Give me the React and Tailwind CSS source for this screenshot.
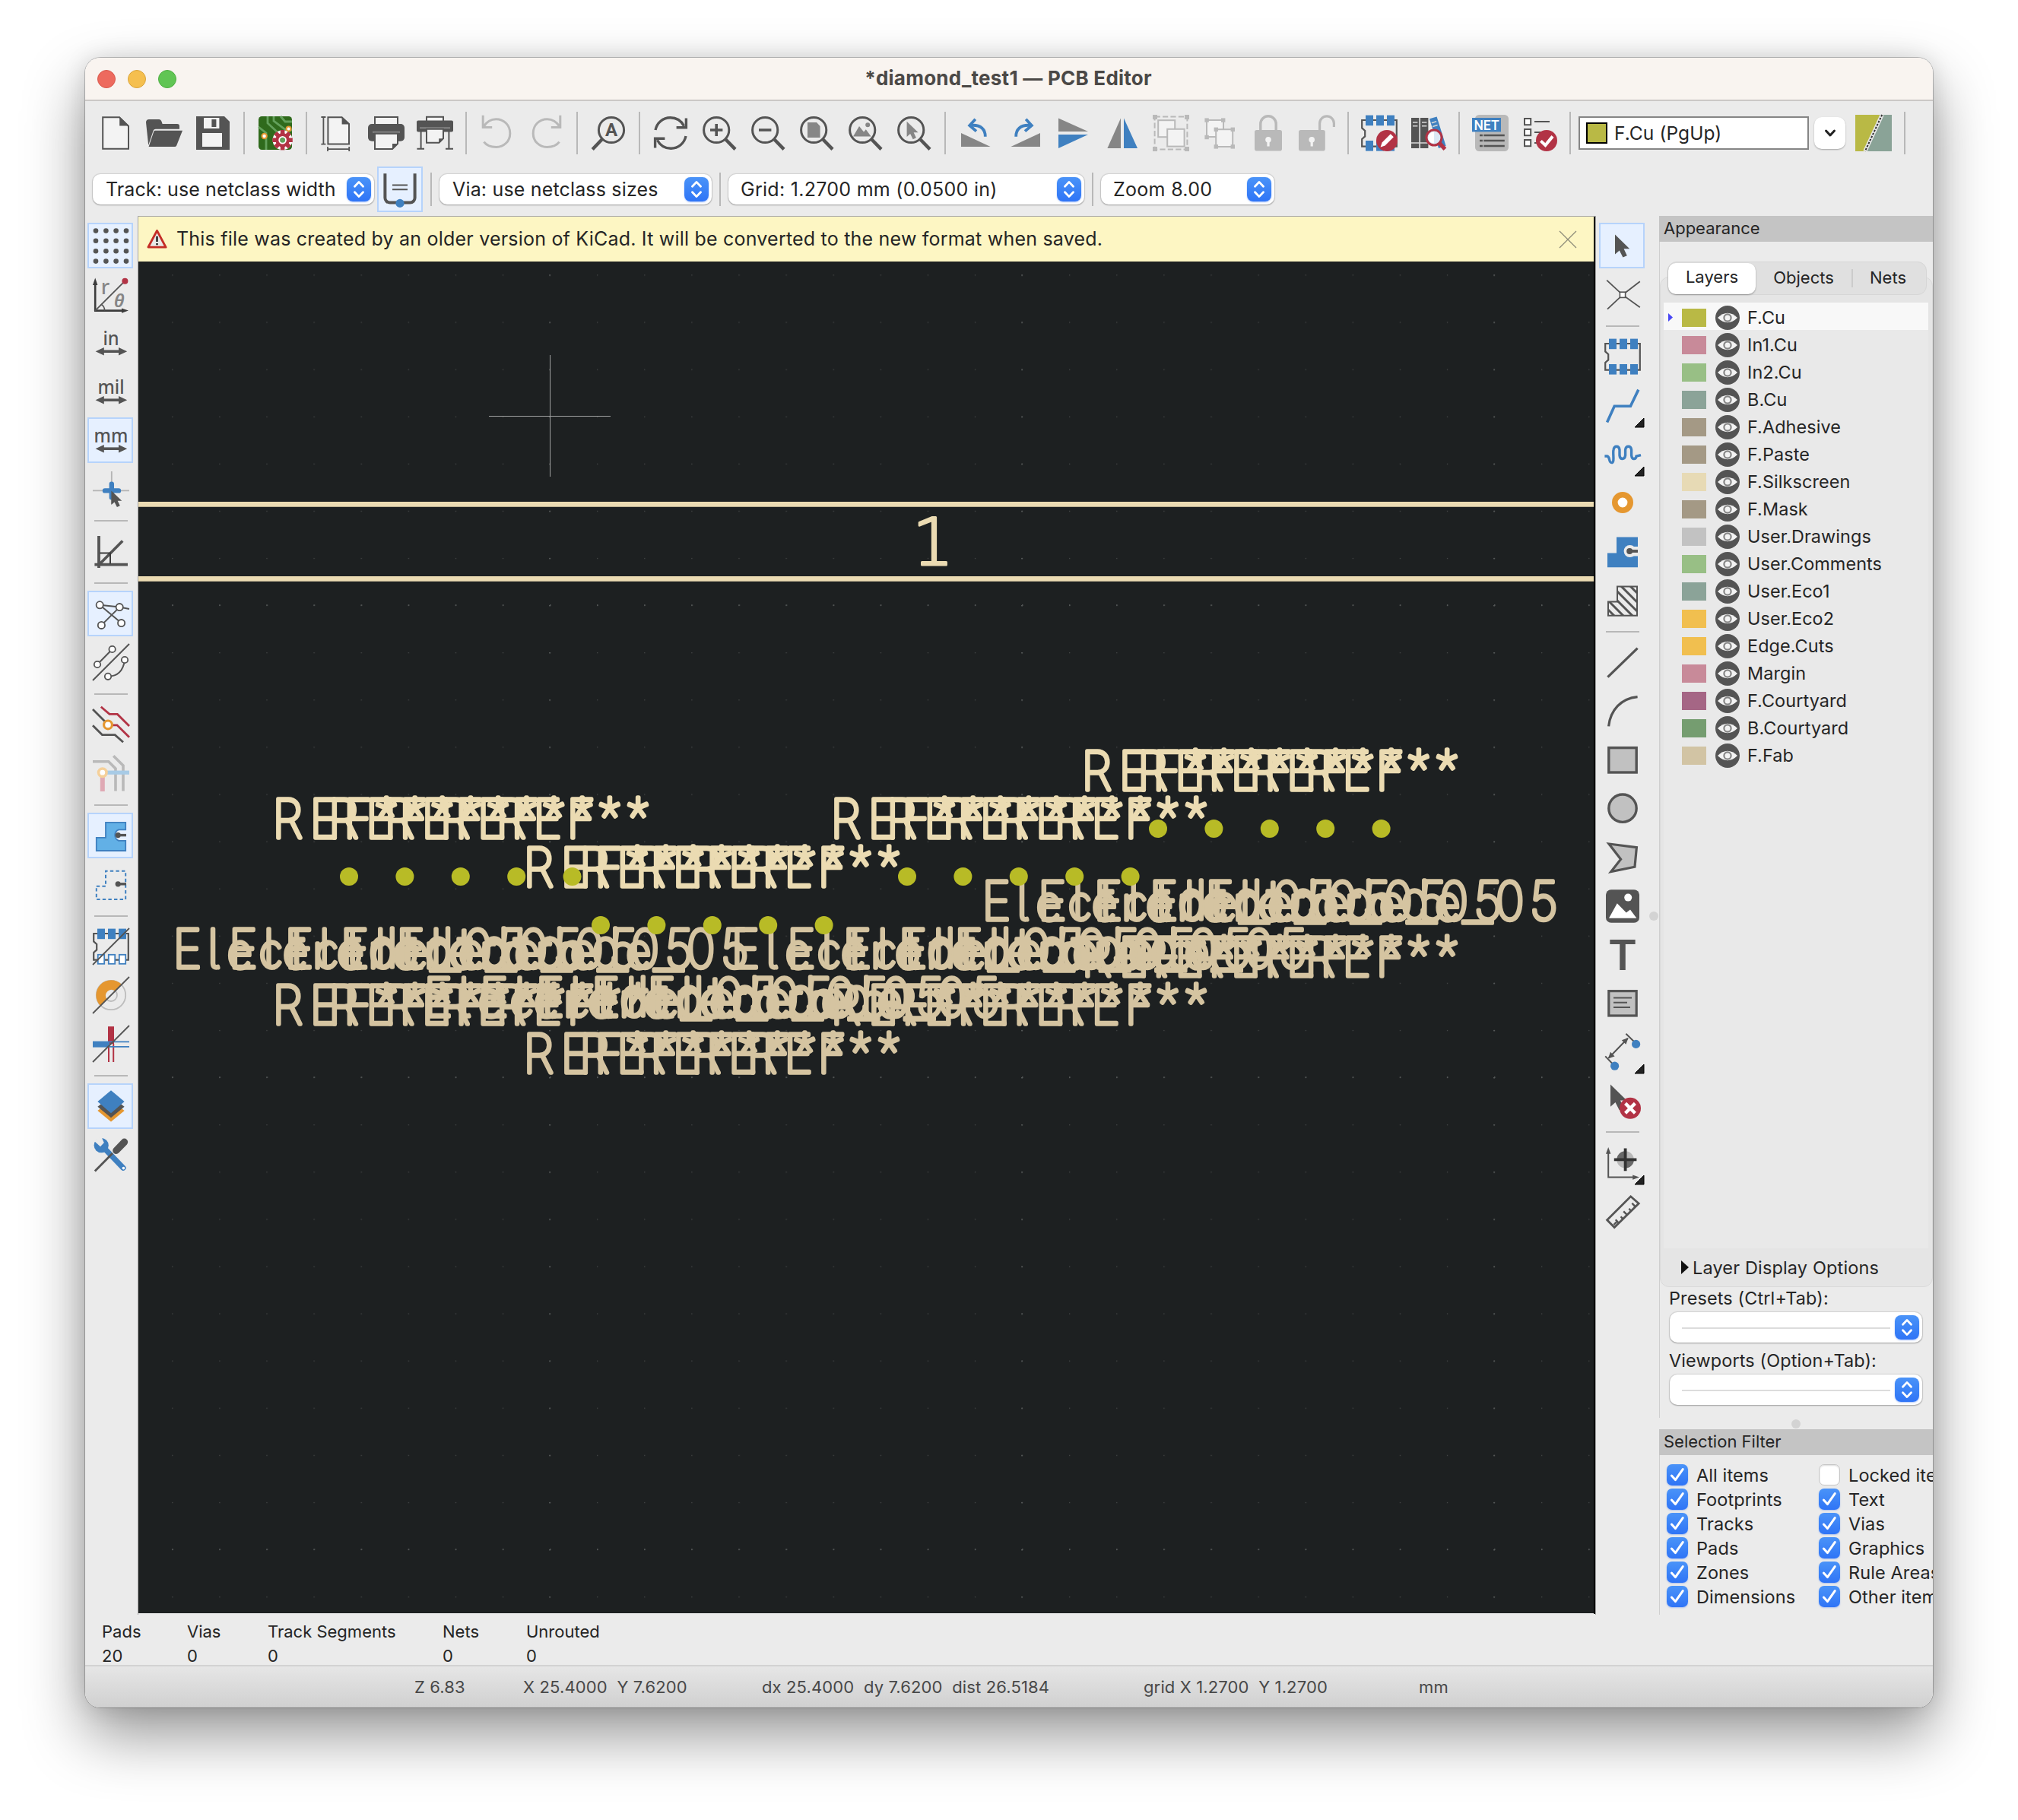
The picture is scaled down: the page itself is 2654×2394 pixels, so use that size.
import React from "react";

const D = "#545454";
const B = "#3f80c0";
const G = "#b9b9b9";
const M = "#868686";
const R = "#b23345";
const O = "#e59730";
const W = "#f3f3f3";

function Icon({ children, size = "w-12 h-12" }) {
  return (
    <svg viewBox="0 0 24 24" className={"shrink-0 overflow-visible " + size} fill="none">
      {children}
    </svg>
  );
}

const Lens = ({ children }) => (
  <>
    <circle cx="10.1" cy="10" r="8.3" stroke={D} strokeWidth="1.5" />
    <path d="M16 16L22.5 22.7" stroke={D} strokeWidth="2.2" />
    {children}
  </>
);
const Cursor = ({ x = 0, y = 0, s = 1, c = D }) => (
  <path transform={`translate(${x} ${y}) scale(${s})`} d="M0 0V13L2.9 10.4L5.2 15L7.9 13.8L5.8 9.3H9.6Z" fill={c} />
);
const Body = () => (
  <path d="M.6 3.5H23.4V20.8H.6V16L2.6 14.2V10.5L.6 8.7Z" stroke={D} strokeWidth="1.1" />
);
const Pads = ({ hollow }) => (
  <>
    {[3, 10, 17].map((x) => (
      <React.Fragment key={x}>
        <rect x={x} y="0.3" width="5" height="6.8" fill={B} />
        {hollow ? (
          <rect x={x + 0.4} y="17.4" width="4.2" height="6" fill="#fff" stroke={B} strokeWidth=".9" />
        ) : (
          <rect x={x} y="17" width="5" height="6.8" fill={B} />
        )}
      </React.Fragment>
    ))}
  </>
);
const Slash = () => <path d="M0 24L24 0" stroke={D} strokeWidth=".9" />;
const ZONE = "M2.4 13.4H8.5V3.4H21.6V8.2H17A3.9 3.9 0 0 0 17 15.4H21.6V22H2.4Z";
const Units = ({ label, w }) => (
  <>
    <text x="12" y="13.3" textAnchor="middle" fontSize="12.8" textLength={w} lengthAdjust="spacingAndGlyphs" fontFamily="Noto Sans, sans-serif" fontWeight="500" fill={D}>{label}</text>
    <path d="M5 17.6H19.5" stroke={D} strokeWidth="1.8" />
    <path d="M1.8 17.6L7.4 15V20.2ZM22.6 17.6L17 15V20.2Z" fill={D} />
  </>
);

const I = {
  new: <><path d="M3.6 1.6H14.5L20.5 7.5V22.4H3.6Z" fill={W} stroke={D} strokeWidth="1" /><path d="M14.6 1.2L20.9 7.2H14.6Z" fill={D} /></>,
  open: <><path d="M0 5C0 3.8.8 3 2 3H8.5C9.5 3 10 3.6 10.4 4.8L10.8 6H20.5C21.6 6 22 6.6 22 7.6V9.4H6.4C5.4 9.4 5 9.8 4.7 10.7L1.6 20Z" fill={D} /><path d="M6.4 10.4H24L20.2 20C19.9 20.7 19.5 21 18.7 21H1.8L5 11.4C5.2 10.7 5.6 10.4 6.4 10.4Z" fill={D} /></>,
  save: <><path d="M1 1H19.5L23 4.5V23H1Z" fill={D} /><rect x="6" y="2" width="10.2" height="7" fill={W} /><rect x="11.2" y="3" width="3" height="5" fill={D} /><rect x="5" y="12" width="13" height="9" fill={W} /></>,
  board: <>
    <rect x="1" y="1" width="22" height="22" rx="2.2" fill="#2f6a1c" />
    <path d="M7 1V5.5L13.5 11.5V16M11 1V4L19 10H23M15.5 1L18.5 4.5H23M1 8L6 12V23" stroke="#63a05b" strokeWidth="1.4" />
    <circle cx="4.8" cy="14" r="1.6" fill="#fff" stroke={O} strokeWidth="1" />
    <circle cx="20.8" cy="9.3" r="1.5" fill="#fff" stroke={O} strokeWidth="1" />
    <g transform="translate(16.8 16.6)">
      <circle r="6" stroke="#fff" strokeWidth="1" fill="#fff" />
      {[0, 45, 90, 135].map((a) => <rect key={a} x="-1.4" y="-6.6" width="2.8" height="13.2" fill={R} transform={`rotate(${a})`} />)}
      <circle r="4.6" fill={R} /><circle r="2.2" fill="#63a05b" stroke="#fff" strokeWidth=".9" />
    </g>
  </>,
  page: <><path d="M5.7 1.6H14.8L19.5 6V19.2H5.7Z" fill={W} stroke={D} strokeWidth="1" /><path d="M14.8 1.2L20 6.3H14.8Z" fill={D} /><path d="M2.7 1.5V19.3M1.2 1.5H4.2M1.2 19.3H4.2M5.5 22.6H19.6M5.5 21V24M19.6 21V24" stroke={D} strokeWidth=".9" /></>,
  print: <><rect x="4.5" y="1.5" width="15" height="6" fill={W} stroke={D} strokeWidth="1" /><rect x="0" y="6" width="24" height="11.4" rx="2.5" fill={D} /><path d="M3 11.4H21" stroke="#858585" strokeWidth="1" /><path d="M4.5 12.4H19.5V19L16 22.5H4.5Z" fill={W} stroke={D} strokeWidth="1" /><path d="M16 22.8V19H19.8Z" fill={D} /></>,
  plot: <><rect x="6.5" y="1.4" width="11" height="4" fill={W} stroke={D} strokeWidth="1" /><rect x="0" y="3.7" width="24" height="7.6" rx="1" fill={D} /><path d="M2 8.6H22" stroke="#858585" strokeWidth="1" /><path d="M6.5 9.4H17.5V15.6L14.7 18.4H6.5Z" fill={W} stroke={D} strokeWidth="1" /><path d="M14.6 18.6V15.6H17.8Z" fill={D} /><path d="M2.8 11V22.4M21.2 11V22.4M.2 22.4H5M19 22.4H24" stroke={D} strokeWidth="1" /></>,
  undo: <path d="M2.6 .4V8.2H8.6M3 7.8C5 4.6 8 2.9 11.2 2.9C16.4 2.9 20.4 6.8 20.4 12.2C20.4 17.4 16.4 21.2 11.3 21.2C8 21.2 5 20.2 3.2 17.8" stroke={G} strokeWidth="1.5" />,
  redo: <path d="M21.4 .4V8.2H15.4M21 7.8C19 4.6 16 2.9 12.8 2.9C7.6 2.9 3.6 6.8 3.6 12.2C3.6 17.4 7.6 21.2 12.7 21.2C16 21.2 19 20.2 20.8 17.8" stroke={G} strokeWidth="1.5" />,
  find: <><circle cx="14" cy="10" r="8.3" stroke={D} strokeWidth="1.5" /><path d="M8 16L1.6 22.7" stroke={D} strokeWidth="2.2" /><text x="14" y="14.2" textAnchor="middle" fontSize="12" fontWeight="700" fontFamily="Roboto, sans-serif" fill={D}>A</text></>,
  refresh: <><path d="M2 10C3 5.2 7 1.9 11.8 1.9C15.6 1.9 19 4 20.8 7.4M22 14C21 18.8 17 22.1 12.2 22.1C8.4 22.1 5 20 3.2 16.6" stroke={D} strokeWidth="1.7" /><path d="M22.2 2.2V8.4H15.8M1.8 21.8V15.6H8.2" stroke={D} strokeWidth="1.7" /></>,
  zin: <Lens><path d="M6 10H14.2M10.1 6V14" stroke={D} strokeWidth="1.8" /></Lens>,
  zout: <Lens><path d="M6 10H14.2" stroke={D} strokeWidth="1.8" /></Lens>,
  zfit: <Lens><path d="M6 5H12L14.3 7.5V15H6Z" fill={M} /></Lens>,
  zobj: <Lens><path d="M4 14.2L8 7.5L11 11.2L12.4 9.6L15.8 14.2Z" fill={M} /><circle cx="13.6" cy="6.6" r="1.5" fill={M} /></Lens>,
  zsel: <Lens><Cursor x={7.3} y={4.4} s={0.78} c={M} /></Lens>,
  ccw: <><path d="M2 12V21H21.3Z" fill={M} /><path d="M17.9 14.4C18 9.6 15 6.6 9 6.9" stroke={B} strokeWidth="1.9" /><path d="M11.4 2.9L7.6 7L12 10.8" stroke={B} strokeWidth="1.9" /></>,
  cw: <><path d="M22 12V21H2.7Z" fill={M} /><path d="M6.1 14.4C6 9.6 9 6.6 15 6.9" stroke={B} strokeWidth="1.9" /><path d="M12.6 2.9L16.4 7L12 10.8" stroke={B} strokeWidth="1.9" /></>,
  mv: <><path d="M2 2.2V11H21.5Z" fill={M} /><path d="M2 22V13H21.5Z" fill={B} /></>,
  mh: <><path d="M2.2 22H11V2.2Z" fill={M} /><path d="M22 22H13V2.2Z" fill={B} /></>,
  group: <><rect x="1.3" y="1.3" width="21.4" height="21.4" stroke={G} strokeWidth="1" strokeDasharray="3.6 1.6" />{[[0, 0], [21, 0], [0, 21], [21, 21]].map(([x, y]) => <rect key={x + "-" + y} x={x} y={y} width="3" height="3" fill={G} />)}<rect x="3.6" y="3.6" width="11" height="11" fill={W} stroke={G} /><rect x="9.6" y="9.4" width="11.2" height="11.4" fill={W} stroke={G} /></>,
  ungroup: <><rect x="3.5" y="3.5" width="11" height="11" fill={W} stroke={G} /><rect x="9.6" y="9.6" width="11" height="11.4" fill={W} stroke={G} />{[[2.2, 2.2], [13, 2.2], [2.2, 13.4], [8.3, 8.3], [19.3, 8.3], [8.3, 19.6], [19.3, 19.6]].map(([x, y]) => <rect key={x + "-" + y} x={x} y={y} width="2.7" height="2.7" fill={G} />)}</>,
  lock: <><path d="M6.9 10V6A5.1 5.1 0 0 1 17.1 6V10" stroke={G} strokeWidth="1.7" /><rect x="3" y="10" width="18" height="13.8" rx="1.4" fill={G} /><circle cx="12" cy="16.4" r="1.9" fill={W} /><path d="M12 16V20.8" stroke={W} strokeWidth="1.6" /></>,
  unlock: <><path d="M13.8 10V5.6A4.7 4.7 0 0 1 23.2 5.6V8" stroke={G} strokeWidth="1.6" /><rect x="0" y="10" width="17.4" height="13.8" rx="1.4" fill={G} /><circle cx="8.6" cy="16.4" r="1.9" fill={W} /><path d="M8.6 16V20.8" stroke={W} strokeWidth="1.6" /></>,
  fpedit: <><Body /><Pads /><circle cx="17" cy="17" r="7" fill={R} /><path d="M12.8 21.2L13.8 18.2L19.4 12.6L21.4 14.6L15.8 20.2Z" fill="#fff" /></>,
  lib: <><rect x="1" y="2" width="5.2" height="20" fill={D} /><rect x="7" y="2" width="5.2" height="20" fill={D} /><path d="M2 5H5.2M2 7.4H5.2M8 5H11.2M8 7.4H11.2M1 18.5H12.2" stroke="#d8d8d8" strokeWidth=".8" /><path d="M13 2.6L17.8 1.2L23.8 20.5L19 22Z" fill={B} /><path d="M14.4 5.4L17.6 4.4M15.1 7.8L18.3 6.8" stroke="#d8d8d8" strokeWidth=".8" /><path d="M19.4 18.4L23.2 22.6" stroke={R} strokeWidth="2.6" /><circle cx="16" cy="15" r="5" fill="#dbe8f4" stroke={R} strokeWidth="1.5" /><path d="M16 11.2V18.8A3.8 3.8 0 0 1 16 11.2" fill="#fff" /></>,
  net: <><rect x="2" y="0" width="22" height="24" rx="2.6" fill={G} /><rect x="0" y="2" width="19" height="9.2" fill={B} /><text x="9.5" y="9.8" textAnchor="middle" fontSize="8.8" textLength="16.6" lengthAdjust="spacingAndGlyphs" fontWeight="500" fontFamily="Roboto, sans-serif" fill="#fff">NET</text><path d="M5 13.5H21.4M5 17H21.4M5 20.5H21.4" stroke={D} strokeWidth="1.2" /><path d="M7.3 12.4V22" stroke={G} strokeWidth=".7" /></>,
  drc: <>{[2.5, 9.5, 16.5].map((y) => <rect key={y} x="2.5" y={y} width="4.1" height="4.1" fill="#fff" stroke={D} />)}<path d="M9 4.5H19M9 11.5H17M9 18.5H12" stroke={D} strokeWidth="1" /><circle cx="17" cy="17" r="7" fill={R} /><path d="M13.2 17.2L16.2 20L21 14.2" stroke="#fff" strokeWidth="2" /></>,
  pair: <><rect width="24" height="24" fill="#b9b945" /><path d="M18 0H24V24H6.8Z" fill="#8aa397" /><path d="M17.6 0L6.4 24" stroke="#e8e8e8" strokeWidth="2.6" /><path d="M17.6 0L6.4 24" stroke="#333" strokeWidth="1" strokeDasharray="1.3 .9" /></>,
  width: <g transform="translate(-.6 0)"><path d="M2.8 1.6V17.6A3.2 3.2 0 0 0 6 20.8H19.2A3.2 3.2 0 0 0 22.4 17.6V1.6" stroke={D} strokeWidth="2" /><path d="M7.6 9.3H17.6M7.6 12.1H17.6" stroke={D} strokeWidth="1" /><circle cx="12.6" cy="21.2" r="2.8" fill={B} /></g>,

  grid: <>{[2, 8.7, 15.3, 22].map((x) => [2.3, 8.9, 15.6, 22.3].map((y) => <circle key={x + "-" + y} cx={x} cy={y} r="1.65" fill={D} />))}</>,
  polar: <><path d="M1.6 23V4M1 22.8H21" stroke="#3c3c3c" strokeWidth="1.3" /><path d="M1.6 1.2L3.2 6H0ZM23.5 22.8L19 21.2V24.4Z" fill="#3c3c3c" /><path d="M1.6 22.8L20 4.4" stroke={D} strokeWidth=".9" /><path d="M5.4 18.6C7 19.4 7.8 21 7.8 22.8" stroke={D} strokeWidth=".8" /><circle cx="21.2" cy="3.4" r="2" fill={R} /><text x="5.4" y="12" fontSize="13.5" fontFamily="Noto Sans, sans-serif" fontWeight="500" fill={M}>r</text><text x="14" y="20.6" fontSize="12" fontStyle="italic" fontFamily="Noto Sans, sans-serif" fontWeight="600" fill={M}>θ</text></>,
  inch: <Units label="in" w={10.6} />,
  mil: <Units label="mil" w={17.5} />,
  mm: <Units label="mm" w={22.4} />,
  cross: <><path d="M0 13.2H24M12.4 .5V22" stroke="#b4b4b4" strokeWidth=".9" /><path d="M12.4 8.8V17.6M8 13.2H17" stroke={B} strokeWidth="3.2" strokeLinecap="round" /><Cursor x={12.2} y={13.2} s={0.72} /></>,
  angle: <><path d="M4 2V23M1.2 20.8H23" stroke={D} strokeWidth="1.9" /><path d="M4 21L19.6 5.2" stroke={D} strokeWidth="1.8" /><path d="M4.6 13.2H11.5V20.2" stroke="#3c3c3c" strokeWidth="1" /></>,
  rats: <><path d="M4.6 6.4L17.6 7.8L24 9M4.6 6.4L18.8 18.3M5.7 19.7L17.6 7.8" stroke={D} strokeWidth="1" />{[[4.6, 6.4], [17.6, 7.8], [18.8, 18.3], [5.7, 19.7]].map(([x, y]) => <circle key={x} cx={x} cy={y} r="2.3" fill="#fff" stroke={D} strokeWidth=".9" />)}</>,
  curved: <><path d="M3 13.5L12.8 3.5M0 24L24 0M10 21.4C16 21.4 20 18 21 10.6" stroke={D} strokeWidth="1" />{[[12.8, 3.5], [3, 13.5], [21, 10.5], [10, 21.4]].map(([x, y]) => <circle key={x} cx={x} cy={y} r="2.1" fill="#fff" stroke={D} strokeWidth=".9" />)}</>,
  hicon: <><path d="M5.4 .4L11 5.2H16.2L24 13M12 12.4H16L24 20.4" stroke={R} strokeWidth="1.4" /><path d="M0 2L9 11M0 12.6L6.2 18.8H14.6L20 23.6" stroke={D} strokeWidth="1.4" /><circle cx="10" cy="12.2" r="2.7" fill="#fff" stroke={O} strokeWidth="1.6" /></>,
  netcol: <><path d="M0 4.4H10.4L15 9V23.8M13.6 .6L20 7V23.8" stroke={G} strokeWidth="1.8" /><path d="M8 11.6H24" stroke="#a8cbe6" strokeWidth="2.6" /><path d="M6.4 13V24" stroke="#dfa9b4" strokeWidth="3" /><circle cx="6.4" cy="11.6" r="2.6" fill="#fff" stroke="#f5d09a" strokeWidth="1.8" /></>,
  zfill: <><path d={ZONE} fill="#62b0e6" stroke={B} strokeWidth=".9" /><circle cx="16.6" cy="11.8" r="1.8" fill={D} /><path d="M16.6 11.8H22" stroke={D} strokeWidth="1.7" /></>,
  zout2: <><path d="M2.4 13.4H8.5V3.4H21.6V22H2.4Z" stroke={B} strokeWidth="1" strokeDasharray="2.2 1.6" /><circle cx="16.6" cy="11.9" r="1.8" fill={D} /><path d="M16.6 11.9H22" stroke={D} strokeWidth="1.7" /></>,
  fpsk: <><Body /><Pads hollow /><Slash /></>,
  padsk: <><circle cx="12" cy="12" r="9.6" stroke="#bdbdbd" strokeWidth=".9" /><circle cx="12" cy="12" r="4" stroke="#bdbdbd" strokeWidth=".9" /><path d="M5 19A9.9 9.9 0 0 1 19 5L14.8 9.2A4 4 0 0 0 9.2 14.8Z" fill={O} /><Slash /></>,
  trsk: <><path d="M12 .6V12" stroke={R} strokeWidth="4" /><path d="M10.5 12V24M13.6 12V24" stroke={R} strokeWidth="1" /><path d="M0 12.3H11" stroke={B} strokeWidth="4" /><path d="M11 10.7H24M11 13.9H24" stroke={B} strokeWidth=".9" /><Slash /></>,
  layers: <><path d="M12 8L20.8 15L12 22.3L3.2 15Z" fill={O} /><path d="M12 5.4L20.8 12.4L12 19.6L3.2 12.4Z" fill={D} /><path d="M12 1.6L20.8 9L12 16.6L3.2 9Z" fill={B} /></>,
  tools: <><path d="M5 5L20 20.6" stroke={B} strokeWidth="3.6" strokeLinecap="round" /><circle cx="5.6" cy="5.8" r="4.8" fill={B} /><path d="M5.4 -.4L1 3L5 6.6L7.4 4Z" fill="#ebebeb" /><circle cx="20.2" cy="20.8" r=".9" fill="#fff" /><path d="M1.4 22.8L13 11" stroke={D} strokeWidth="1.4" /><path d="M15.4 9.2L20.8 3.6" stroke={D} strokeWidth="4.6" strokeLinecap="round" /></>,

  arrow: <Cursor x={7} y={4.8} s={1} />,
  inspect: <><path d="M1.6 2.8L12 12.4L23.4 3.6M2 21.8L12 12.4L23.4 20.6" stroke={D} strokeWidth=".9" /><rect x="10.2" y="10.6" width="3.6" height="3.6" fill="#fff" stroke={D} strokeWidth=".8" /></>,
  fp: <><Body /><Pads /></>,
  route: <path d="M1.8 23.2L6.6 12.6H17.2L22.4 1.8" stroke={B} strokeWidth="1.8" />,
  tune: <path d="M.2 13.5H1.6C4 13.5 2.6 17.8 4.7 17.8C7 17.8 5.4 12 6 9.4C6.5 6.4 9.6 6.4 10 9.4V13C10.3 16 13.4 16 13.8 13V9.4C14.2 6.4 17.4 6.4 17.8 9.4V13C18.2 16.4 20.8 15.4 21 13.6L24 12.8" stroke={B} strokeWidth="1.7" />,
  via: <circle cx="12" cy="12" r="5.1" fill="#fff" stroke={O} strokeWidth="3.8" />,
  zone: <><path d="M2 13.2H8V2.8H22V9H17A3.2 3.2 0 0 0 17 15.2H22V22.6H2Z" fill={B} /><circle cx="16.8" cy="12" r="4" fill="#ebebeb" /><circle cx="16.6" cy="12" r="2" fill={D} /><path d="M16.6 12H22" stroke={D} strokeWidth="1.9" /></>,
  keep: <><defs><clipPath id="kp"><path d="M2.4 13.2H8.4V3.2H21.6V22.4H2.4Z" /></clipPath></defs><g clipPath="url(#kp)"><path d="M-4 6L14 24M0 4L20 24M4 2L26 24M8 0L28 20M-6 10L8 24M13 -1L30 16" stroke={D} strokeWidth="1.5" /></g><path d="M2.5 13.2H8.5V3.2H21.5V22.4H2.5Z" stroke={D} strokeWidth="1" /></>,
  line: <path d="M2.2 21.8L21.8 2.8" stroke={D} strokeWidth="1.6" />,
  arc: <path d="M2.8 22.2C4 11.5 11 3.8 21.8 2.8" stroke={D} strokeWidth="1.6" />,
  rect: <rect x="2.9" y="4.3" width="18.2" height="16.2" fill="#c1c1c1" stroke={D} strokeWidth="1.7" />,
  circle: <circle cx="12" cy="12.1" r="9.1" fill="#c1c1c1" stroke={D} strokeWidth="1.7" />,
  poly: <path d="M3 3.5L21.2 5.8L20 18.6L4.4 21.8L10.8 13.6Z" fill="#c1c1c1" stroke={D} strokeWidth="1.6" />,
  image: <><rect x="1" y="1.6" width="22" height="21.8" rx="3.4" fill={D} /><path d="M3 20.4L8.4 10.6L14.4 16.8L17 14.8L21.2 20.4Z" fill="#fff" /><circle cx="15.6" cy="6.8" r="2.5" fill="#fff" /></>,
  text: <text x="12" y="22.4" textAnchor="middle" fontSize="27.4" textLength="19" lengthAdjust="spacingAndGlyphs" fontFamily="Inter, sans-serif" fontWeight="600" fill={D}>T</text>,
  tbox: <><rect x="2.9" y="4.3" width="18.2" height="16.2" fill="#c1c1c1" stroke={D} strokeWidth="1.6" /><path d="M6 8.8H18M6 11.9H15M6 15H17" stroke={D} strokeWidth="1" /></>,
  dim: <><path d="M14.2 .4L21 7M.6 15.2L6.8 21.6M2.8 16.4L15.4 3.4" stroke={D} strokeWidth="1" /><path d="M2.4 16.8L4 12.4L6.8 15.2ZM15.8 3L14.2 7.4L11.4 4.6Z" fill={D} /><circle cx="20.8" cy="7.2" r="2.8" fill={B} /><circle cx="6.8" cy="21.6" r="2.8" fill={B} /></>,
  del: <><Cursor x={4} y={1.8} s={1.12} /><circle cx="17" cy="17.4" r="7" fill={R} /><path d="M13.8 14.2L20.2 20.6M20.2 14.2L13.8 20.6" stroke="#fff" strokeWidth="2.2" /></>,
  origin: <><path d="M2.6 22V5M2.1 21.8H20" stroke={D} strokeWidth="1" /><path d="M2.6 2L4.2 6.4H1ZM23 21.8L18.6 20.2V23.4Z" fill={D} /><circle cx="13.8" cy="10.2" r="5.6" fill={G} /><path d="M13.8 10.2V4.6A5.6 5.6 0 0 0 8.2 10.2ZM13.8 10.2V15.8A5.6 5.6 0 0 0 19.4 10.2Z" fill={D} opacity=".8" /><path d="M13.8 2.8V17.6M6.4 10.2H21.2" stroke="#333" strokeWidth="1.9" /></>,
  ruler: <><path d="M17.3 2.4L22.6 7L6.6 22.8L1.8 17.9Z" stroke={D} strokeWidth="1.4" /><path d="M5.2 19.6L7 17.8M8.6 18.6L6.4 16.2M11.2 15.8L9.8 14.2M14 13.2L11.6 10.8M16.6 10.6L15.2 9M19.4 7.8L17.2 5.4" stroke={D} strokeWidth="1.2" transform="translate(1 1.4)" /></>,
};

const TOP = ["new", "open", "save", "|", "board", "|", "page", "print", "plot", "|", "undo", "redo", "|", "find", "|", "refresh", "zin", "zout", "zfit", "zobj", "zsel", "|", "ccw", "cw", "mv", "mh", "group", "ungroup", "lock", "unlock", "|", "fpedit", "lib", "|", "net", "drc", "|"];
const LEFT = ["grid*", "polar", "inch", "mil", "mm*", "cross", "|", "angle", "|", "rats*", "curved", "|", "hicon", "netcol", "|", "zfill*", "zout2", "|", "fpsk", "padsk", "trsk", "|", "layers*", "tools"];
const RIGHT = ["arrow*", "inspect", "|", "fp", "route+", "tune+", "via", "zone", "keep", "|", "line", "arc", "rect", "circle", "poly", "image", "text", "tbox", "dim+", "del", "|", "origin+", "ruler"];

function SideBar({ items }) {
  return (
    <div className="flex flex-col w-[60px] pt-[7px]">
      {items.map((it, i) => {
        if (it === "|")
          return (
            <div key={i} className="h-[18px] flex items-center justify-center pl-[2px] pt-[2px]">
              <div className="w-11 h-[2px] bg-[#b8b8b8]" />
            </div>
          );
        const on = it.endsWith("*");
        const menu = it.endsWith("+");
        return (
          <div key={i} className="h-16 flex items-center">
            <div className={"relative w-[60px] h-[60px] flex items-center justify-center pl-[2px] " + (on ? "bg-[#e6f0ff] outline-2 -outline-offset-2 outline-[#b6d3fb]" : "")}>
              <Icon>{I[it.replace(/[*+]/, "")]}</Icon>
              {menu && (
                <svg viewBox="0 0 14 14" className="absolute right-0 bottom-0 w-[14px] h-[14px]">
                  <path d="M13 1V13H1Z" fill="#222" stroke="#000" />
                </svg>
              )}
            </div>
          </div>
        );
      })}
    </div>
  );
}

function Stepper() {
  return (
    <div className="w-8 h-8 rounded-[8px] bg-linear-to-b from-[#4a93f8] to-[#2f74f6] flex items-center justify-center shrink-0 shadow-[0_1px_2px_rgba(50,110,240,.4)]">
      <svg viewBox="0 0 16 24" className="w-4 h-6" fill="none" stroke="#fff" strokeWidth="2.8" strokeLinecap="round" strokeLinejoin="round">
        <path d="M2.5 8.2L8 2.4L13.5 8.2M2.5 15.8L8 21.6L13.5 15.8" />
      </svg>
    </div>
  );
}

function Select({ label, className }) {
  return (
    <div className={"h-10 rounded-[10px] bg-white flex items-center justify-between pr-1 shadow-[0_0_1px_1px_rgba(0,0,0,.10),0_1px_2px_rgba(0,0,0,.25)] " + className}>
      {label ? <span className="text-[25px] leading-10 whitespace-nowrap">{label}</span> : <div className="w-[274px] h-[2px] bg-[#dcdcdc] mt-[2px]" />}
      <Stepper />
    </div>
  );
}

const VSep = ({ h = "h-14", w = "w-[18px]" }) => (
  <div className={"flex justify-center shrink-0 " + w}>
    <div className={"w-[2px] bg-[#b8b8b8] " + h} />
  </div>
);

const U = 49 / 21;
const SX = 0.93;
const PEN = 5.4;
/* board font metrics: advance and left bearing in units, drawn size, outline bearing in em, baseline shift */
const GLYPH = {
  R: [21, 5, 70, 0.11, 0],
  E: [19, 5, 70, 0.11, 0],
  F: [18, 5, 70, 0.11, 0],
  "*": [16, 2.9, 65, 0.01, -7.4],
  l: [11, 5, 70, 0.09, 0],
  e: [18, 4, 62, 0.06, -0.6],
  c: [18, 4, 62, 0.06, -0.6],
  t: [12, 2.2, 73, 0.01, 0],
  r: [13, 5, 62, 0.08, 0],
  o: [19, 4.8, 62, 0.06, -0.6],
  d: [19, 4, 70, 0.06, -1],
  _: [16, 0.2, 96, 0, 1.5],
  0: [20, 4.5, 69, 0.07, -0.4],
  5: [20, 4.2, 70, 0.08, -0.4],
};

function BoardText({ x, y, color, children }) {
  let pen = 0;
  return (
    <text
      transform={`translate(${x} ${y + 53.4}) scale(${SX} 1)`}
      fontFamily="Inter, sans-serif"
      fontWeight="100"
      fill={color}
      stroke={color}
      strokeWidth={PEN}
      strokeLinejoin="round"
      strokeLinecap="round"
      style={{ fontFeatureSettings: '"cv05"' }}
    >
      {[...children].map((ch, i) => {
        const [adv, lsb, size, bear, dy] = GLYPH[ch];
        const at = ((pen + lsb - 5) * U) / SX + PEN / 2 - bear * size;
        pen += adv;
        return (
          <tspan key={i} x={at} y={dy} fontSize={size} fontFamily={"*tr".includes(ch) ? "Roboto, sans-serif" : undefined}>
            {ch}
          </tspan>
        );
      })}
    </text>
  );
}

const STEP = 73.4;
const GROUPS = [
  { x: 363, y: 1049, pad: 459 },
  { x: 693, y: 1113, pad: 790 },
  { x: 1097, y: 1049, pad: 1193 },
  { x: 1427, y: 986, pad: 1523 },
];
const N = [0, 1, 2, 3, 4];

function Board() {
  return (
    <svg viewBox="182 344 1914 1778" className="block w-[1914px] h-[1778px] bg-[#1d2021]">
      <defs>
        <pattern id="minor" x="723" y="796" width="62.1" height="62.1" patternUnits="userSpaceOnUse">
          <rect width="1.2" height="1.2" fill="#4a4d4d" />
        </pattern>
        <pattern id="cols" x="722" y="796" width="621" height="62.1" patternUnits="userSpaceOnUse">
          <rect width="2" height="1.4" fill="#555858" />
        </pattern>
        <pattern id="rows" x="723" y="795" width="62.1" height="621" patternUnits="userSpaceOnUse">
          <rect width="1.4" height="2" fill="#555858" />
        </pattern>
      </defs>
      <rect x="182" y="344" width="1914" height="1778" fill="url(#minor)" />
      <rect x="182" y="344" width="1914" height="1778" fill="url(#cols)" />
      <rect x="182" y="344" width="1914" height="1778" fill="url(#rows)" />
      <path d="M643 547.5H803M723.5 467V627" stroke="#a0a1a1" strokeWidth="1" />
      <path d="M182 663.3H2096M182 761.3H2096" stroke="#ebdbb2" strokeWidth="6.8" />
      <text x="1227" y="743.4" textAnchor="middle" fontFamily="DejaVu Sans, sans-serif" fontWeight="200" fontSize="86" fill="#ebdbb2" stroke="#ebdbb2" strokeWidth="3" strokeLinejoin="round">1</text>
      {GROUPS.map((g) => N.map((n) => <BoardText key={g.x + "f" + n} x={g.x + n * STEP} y={g.y + 244.5} color="#d5c4a1">REF**</BoardText>))}
      {GROUPS.map((g) => N.map((n) => <BoardText key={g.x + "e" + n} x={g.x - 131 + n * STEP} y={g.y + 171} color="#d5c4a1">Electrode_05</BoardText>))}
      {GROUPS.map((g) => N.map((n) => <BoardText key={g.x + "s" + n} x={g.x + n * STEP} y={g.y} color="#ebdbb2">REF**</BoardText>))}
      {GROUPS.map((g) => N.map((n) => <circle key={g.x + "p" + n} cx={g.pad + n * STEP} cy={g.y + 104} r="12" fill="#b8bb26" />))}
    </svg>
  );
}

const LAYERS = [
  ["F.Cu", "bg-[#b9b945]"], ["In1.Cu", "bg-[#c88a99]"], ["In2.Cu", "bg-[#98bf85]"], ["B.Cu", "bg-[#8ba398]"],
  ["F.Adhesive", "bg-[#a49985]"], ["F.Paste", "bg-[#a49985]"], ["F.Silkscreen", "bg-[#e7dab5]"], ["F.Mask", "bg-[#a49985]"],
  ["User.Drawings", "bg-[#c2c2c2]"], ["User.Comments", "bg-[#98bf85]"], ["User.Eco1", "bg-[#8ba398]"], ["User.Eco2", "bg-[#f1bf4f]"],
  ["Edge.Cuts", "bg-[#f1bf4f]"], ["Margin", "bg-[#c88a99]"], ["F.Courtyard", "bg-[#a56685]"], ["B.Courtyard", "bg-[#759d70]"], ["F.Fab", "bg-[#d2c4a4]"],
];

const Check = ({ label, off }) => (
  <div className="h-8 flex items-start">
    {off ? (
      <div className="w-7 h-7 rounded-[7px] bg-white border border-[#c6c6c6] shadow-[inset_0_1px_2px_rgba(0,0,0,.15)] shrink-0" />
    ) : (
      <div className="w-7 h-7 rounded-[7px] bg-linear-to-b from-[#4a93f8] to-[#2f74f6] shrink-0 flex items-center justify-center shadow-[0_1px_2px_rgba(50,110,240,.35)]">
        <svg viewBox="0 0 20 20" className="w-5 h-5" fill="none" stroke="#fff" strokeWidth="3" strokeLinecap="round" strokeLinejoin="round">
          <path d="M2.4 11L7.4 16.6L17.2 2.6" />
        </svg>
      </div>
    )}
    <span className="ml-[11px] text-[23.5px] leading-[30px] tracking-[0.1px] whitespace-nowrap">{label}</span>
  </div>
);

const Header = ({ children }) => (
  <div className="h-[34px] bg-[#c4c4c4] pl-[6px] text-[22px] leading-[33px]">{children}</div>
);

function Appearance() {
  return (
    <div className="w-[360px] flex flex-col overflow-hidden">
      <Header>Appearance</Header>
      <div className="border-l border-[#cfcfcf] h-[1547px]">
        <div className="h-[1375px] pt-[46px]">
          <div className="h-[1329px] rounded-[12px] bg-[#e5e5e5] border border-[#dadada] flex flex-col">
            <div className="-mt-[21px] ml-[9px] w-[341px] h-11 shrink-0 rounded-[12px] bg-[#e0e0e0] border border-[#d6d6d6] flex items-center text-[22px]">
              <div className="w-[115px] h-[41px] rounded-[10px] bg-white text-center leading-[37px] shadow-[0_1px_2px_rgba(0,0,0,.35)]">Layers</div>
              <div className="w-[126px] text-center leading-[40px] pb-[3px]">Objects</div>
              <div className="w-[2px] h-6 bg-[#cbcbcb]" />
              <div className="w-[92px] text-center leading-[40px] pb-[3px]">Nets</div>
            </div>
            <div className="mt-[10px] ml-[4px] w-[348px] h-[1244px] bg-[#e9e9e9]">
              {LAYERS.map(([name, color], i) => (
                <div key={name} className={"h-9 flex items-center pl-[6px] " + (i ? "" : "bg-[#f8f8f8]")}>
                  <svg viewBox="0 0 6 11" className="w-[6px] h-[11px] mt-[2px]">{i === 0 && <path d="M0 0L6 5.5L0 11Z" fill="#4846f5" />}</svg>
                  <div className={"ml-3 w-8 h-6 mt-[4px] " + color} />
                  <svg viewBox="0 0 32 32" className="ml-3 w-8 h-8 mt-1">
                    <circle cx="16" cy="16" r="16" fill={D} />
                    <path d="M3 16Q16 3.5 29 16Q16 28.5 3 16Z" fill={W} />
                    <circle cx="16" cy="16" r="4.6" fill={W} stroke={M} strokeWidth="2.2" />
                    <circle cx="16" cy="16" r="1.6" fill={W} />
                  </svg>
                  <span className="ml-[10px] text-[23.4px] leading-9 mt-[4px] tracking-[0.1px]">{name}</span>
                </div>
              ))}
            </div>
            <div className="flex items-center pl-[27px] h-[50px]">
              <svg viewBox="0 0 10 18" className="w-[10px] h-[18px]"><path d="M0 0L10 9L0 18Z" fill="#111" /></svg>
              <span className="ml-[5px] text-[23.5px] tracking-[0.15px] pt-[2px]">Layer Display Options</span>
            </div>
          </div>
        </div>
        <div className="pl-[12px] text-[23.4px] tracking-[0.15px] leading-[30px] pb-[2px]">Presets (Ctrl+Tab):</div>
        <Select className="w-[332px] ml-[13px] pl-4 mt-[1px]" />
        <div className="pl-[12px] text-[23.4px] tracking-[0.15px] leading-[32px] mt-[8px]">Viewports (Option+Tab):</div>
        <Select className="w-[332px] ml-[13px] pl-4 mt-[2px]" />
      </div>
      <div className="h-[15px] flex items-center justify-center pt-px">
        <div className="w-3 h-3 rounded-full bg-[#d3d3d3]" />
      </div>
      <Header>Selection Filter</Header>
      <div className="border-l border-[#cfcfcf] h-[210px] pt-3 pl-[9px] flex">
        <div className="w-[200px] shrink-0">
          {["All items", "Footprints", "Tracks", "Pads", "Zones", "Dimensions"].map((l) => <Check key={l} label={l} />)}
        </div>
        <div className="shrink-0">
          {["Locked items", "Text", "Vias", "Graphics", "Rule Areas", "Other items"].map((l, i) => <Check key={l} label={l} off={i === 0} />)}
        </div>
      </div>
    </div>
  );
}

const STATS = [["Pads", "20", "w-[112px]"], ["Vias", "0", "w-[106px]"], ["Track Segments", "0", "w-[230px]"], ["Nets", "0", "w-[110px]"], ["Unrouted", "0", "w-[160px]"]];

export default function App() {
  return (
    <div className="w-[2654px] h-[2394px] bg-white pt-[76px] pl-[112px] overflow-hidden text-[#252525] font-['Inter','Liberation_Sans',sans-serif]">
      <div className="w-[2430px] h-[2170px] rounded-[20px] shadow-[0_0_0_1px_rgba(0,0,0,.22),0_36px_80px_rgba(0,0,0,.42),0_0_30px_rgba(0,0,0,.12)]">
        <div className="w-full h-full rounded-[20px] overflow-hidden bg-[#ebebeb] flex flex-col">
          <div className="h-[57px] shrink-0 bg-[#f9f4f0] border-b-2 border-[#cbc8c6] grid grid-cols-[1fr_auto_1fr] items-center">
            <div className="flex gap-4 pl-4">
              <div className="w-6 h-6 rounded-full bg-[#ed6a5e] border border-[#d8584c]" />
              <div className="w-6 h-6 rounded-full bg-[#f5bf4f] border border-[#d9a43c]" />
              <div className="w-6 h-6 rounded-full bg-[#61c554] border border-[#4fae43]" />
            </div>
            <div className="text-[26px] leading-8 tracking-[0.25px] font-bold text-[#4b4846] -mt-px pr-[2px] whitespace-nowrap">*diamond_test1 — PCB Editor</div>
          </div>

          <div className="h-[83px] shrink-0 flex items-center pl-2">
            {TOP.map((it, i) => it === "|" ? <VSep key={i} /> : (
              <div key={i} className="w-16 flex justify-center shrink-0"><Icon>{I[it]}</Icon></div>
            ))}
            <div className="ml-[2px] w-[303px] h-11 bg-white border-2 border-[#858585] flex items-center pl-2 shrink-0">
              <div className="w-7 h-7 bg-[#b9b945] border-2 border-black" />
              <span className="ml-[9px] text-[24.5px] leading-10 tracking-[0.1px]">F.Cu (PgUp)</span>
            </div>
            <div className="ml-[7px] w-[41px] h-[42px] rounded-[10px] bg-white shadow-[0_1px_2px_rgba(0,0,0,.3)] flex items-center justify-center shrink-0">
              <svg viewBox="0 0 16 12" className="w-4 h-3" fill="none" stroke="#222" strokeWidth="3" strokeLinecap="round" strokeLinejoin="round"><path d="M2.5 3L8 9L13.5 3" /></svg>
            </div>
            <div className="ml-[13px]"><Icon>{I.pair}</Icon></div>
            <VSep w="w-[34px]" />
          </div>

          <div className="h-[68px] shrink-0 flex items-center pl-[10px] pb-[2px]">
            <Select label="Track: use netclass width" className="w-[370px] pl-[17px] tracking-[0.1px]" />
            <div className="ml-[4px] w-[60px] h-[60px] bg-[#e6f0ff] border-2 border-[#b6d3fb] flex items-center justify-center"><Icon>{I.width}</Icon></div>
            <VSep h="h-11" w="w-[22px]" />
            <Select label="Via: use netclass sizes" className="w-[358px] pl-[17px] tracking-[0.17px]" />
            <VSep h="h-11" w="w-[22px]" />
            <Select label="Grid: 1.2700 mm (0.0500 in)" className="w-[468px] pl-[16px] tracking-[0.28px]" />
            <VSep h="h-11" w="w-[22px]" />
            <Select label="Zoom 8.00" className="w-[228px] pl-[16px] tracking-[0.3px]" />
          </div>

          <div className="h-[1840px] shrink-0 flex">
            <div className="w-[69px] shrink-0 pl-[3px]"><SideBar items={LEFT} /></div>
            <div className="w-[1918px] shrink-0 border-t border-l border-r border-[#a6a6a6]">
              <div className="border-r-2 border-black h-[1838px] bg-[#ebebeb]">
                <div className="h-[59px] bg-[#fdf6c3] flex items-center pl-[11px] pr-[22px]">
                  <svg viewBox="0 0 28 28" className="w-[27px] h-[27px]"><path d="M14 2.5L26 25H2Z" fill="#e9e9e9" stroke="#c42d26" strokeWidth="3" strokeLinejoin="round" /><path d="M14 10V17.6M14 19.6V22" stroke="#111" strokeWidth="2.4" /></svg>
                  <span className="ml-[12px] pt-px text-[25px] tracking-[0.21px] whitespace-nowrap">This file was created by an older version of KiCad. It will be converted to the new format when saved.</span>
                  <svg viewBox="0 0 24 24" className="w-6 h-6 ml-auto"><path d="M1 1L23 23M23 1L1 23" stroke="#8c8a78" strokeWidth="1.2" /></svg>
                </div>
                <Board />
              </div>
            </div>
            <div className="w-[68px] shrink-0 pl-[4px]"><SideBar items={RIGHT} /></div>
            <div className="w-[15px] shrink-0 flex items-center justify-center pt-[2px]"><div className="w-3 h-3 rounded-full bg-[#d3d3d3] shrink-0" /></div>
            <Appearance />
          </div>

          <div className="h-[66px] shrink-0 flex pl-[22px] pt-[6px] text-[22px] leading-8">
            {STATS.map(([a, b, w]) => <div key={a} className={w}><div className="whitespace-nowrap">{a}</div><div>{b}</div></div>)}
          </div>
          <div className="h-[56px] shrink-0 border-t-2 border-[#d2d2d2] bg-linear-to-b from-[#e6e6e6] to-[#d0d0d0] flex items-center text-[22px] tracking-[0.13px] text-[#484848] whitespace-pre">
            <div className="ml-[433px] w-[143px]">Z 6.83</div>
            <div className="w-[314px]">X 25.4000  Y 7.6200</div>
            <div className="w-[502px]">dx 25.4000  dy 7.6200  dist 26.5184</div>
            <div className="w-[362px]">grid X 1.2700  Y 1.2700</div>
            <div>mm</div>
          </div>
        </div>
      </div>
    </div>
  );
}
